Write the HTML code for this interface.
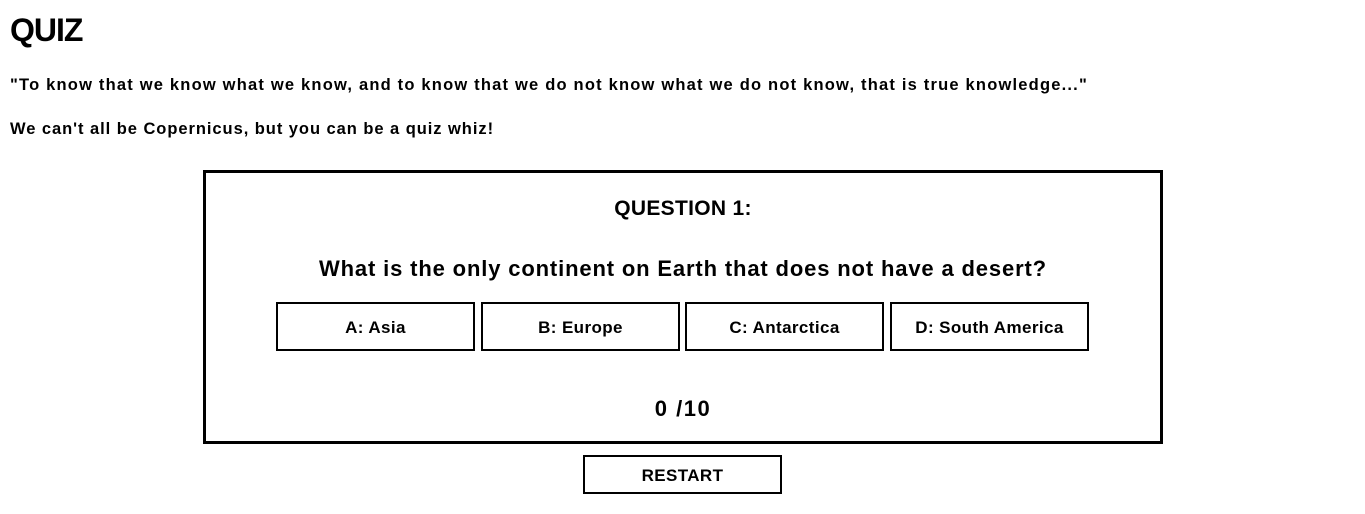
<!DOCTYPE html>
<html><head><meta charset="utf-8"><style>
body{margin:0;background:#fff;font-family:"Liberation Sans","DejaVu Sans",sans-serif;color:#000;width:1365px;height:514px;overflow:hidden;position:relative}
.a{position:absolute;white-space:nowrap;font-weight:bold}
h1{position:absolute;left:10px;top:12px;margin:0;font-size:32px;font-weight:bold;letter-spacing:-1px}
.box{position:absolute;left:203px;top:170px;width:954px;height:268px;border:3px solid #000}
.btn{position:absolute;top:302px;width:195px;height:45px;border:2px solid #000;text-align:center;line-height:47px;font-size:17px;font-weight:bold;letter-spacing:0.4px}
</style></head><body>
<h1>QUIZ</h1>
<div class="a" style="left:10px;top:76px;font-size:16.5px;letter-spacing:1.2px">"To know that we know what we know, and to know that we do not know what we do not know, that is true knowledge..."</div>
<div class="a" style="left:10px;top:120px;font-size:16.5px;letter-spacing:0.95px">We can't all be Copernicus, but you can be a quiz whiz!</div>
<div class="box"></div>
<div class="a" style="left:203px;width:960px;text-align:center;top:197px;font-size:21px;letter-spacing:0.3px">QUESTION 1:</div>
<div class="a" style="left:203px;width:960px;text-align:center;top:256px;font-size:22px;letter-spacing:0.85px">What is the only continent on Earth that does not have a desert?</div>
<div class="btn" style="left:276px">A: Asia</div>
<div class="btn" style="left:481px">B: Europe</div>
<div class="btn" style="left:685px">C: Antarctica</div>
<div class="btn" style="left:890px">D: South America</div>
<div class="a" style="left:203px;width:960px;text-align:center;top:396px;font-size:22px;letter-spacing:1.5px">0 /10</div>
<div class="btn" style="left:583px;top:455px;height:35px;line-height:38px;font-size:17px">RESTART</div>
</body></html>
